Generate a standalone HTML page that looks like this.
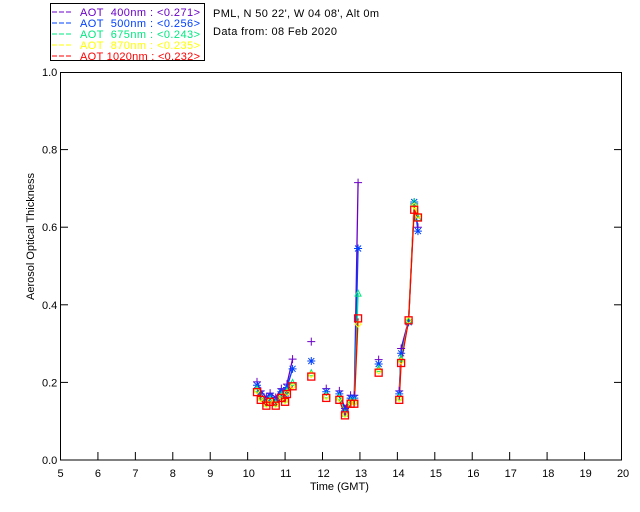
<!DOCTYPE html>
<html><head><style>
body{margin:0;background:#fff;width:640px;height:512px;overflow:hidden}
svg{display:block}
text{font-family:"Liberation Sans",sans-serif;font-size:11px}
</style></head><body>
<svg id="s" width="640" height="512" xmlns="http://www.w3.org/2000/svg">
<rect x="0" y="0" width="640" height="512" fill="#fff"/>
<rect x="50.5" y="3.5" width="154" height="57" fill="none" stroke="#000"/>
<g font-size="11">
<line x1="52" y1="12" x2="73" y2="12" stroke="#6a00c8" stroke-dasharray="5,2"/><text x="80" y="16" fill="#6a00c8" textLength="120" lengthAdjust="spacing" xml:space="preserve">AOT  400nm : &lt;0.271&gt;</text>
<line x1="52" y1="23" x2="73" y2="23" stroke="#0040ff" stroke-dasharray="5,2"/><text x="80" y="27" fill="#0040ff" textLength="120" lengthAdjust="spacing" xml:space="preserve">AOT  500nm : &lt;0.256&gt;</text>
<line x1="52" y1="34" x2="73" y2="34" stroke="#00e880" stroke-dasharray="5,2"/><text x="80" y="38" fill="#00e880" textLength="120" lengthAdjust="spacing" xml:space="preserve">AOT  675nm : &lt;0.243&gt;</text>
<line x1="52" y1="45" x2="73" y2="45" stroke="#ffff00" stroke-dasharray="5,2"/><text x="80" y="49" fill="#ffff00" textLength="120" lengthAdjust="spacing" xml:space="preserve">AOT  870nm : &lt;0.235&gt;</text>
<line x1="52" y1="56" x2="73" y2="56" stroke="#ff0000" stroke-dasharray="5,2"/><text x="80" y="60" fill="#ff0000" textLength="120" lengthAdjust="spacing" xml:space="preserve">AOT 1020nm : &lt;0.232&gt;</text>
</g>
<text x="213" y="17" textLength="166" lengthAdjust="spacing">PML, N 50 22', W 04 08', Alt 0m</text>
<text x="213" y="35" textLength="124" lengthAdjust="spacing">Data from: 08 Feb 2020</text>
<rect x="60.5" y="72.5" width="561" height="387.5" fill="none" stroke="#000"/>
<g id="ax"></g>
<text x="310" y="490" font-size="10">Time (GMT)</text>
<text transform="translate(34,300) rotate(-90)" font-size="9">Aerosol Optical Thickness</text>
<g id="d"></g>
</svg>
<script>
var ns="http://www.w3.org/2000/svg";
function X(t){return 60.5+(t-5)*37.43}
function Y(v){return 460-v*388}
function el(n,a,p,txt){var e=document.createElementNS(ns,n);for(var k in a)e.setAttribute(k,a[k]);if(txt)e.textContent=txt;p.appendChild(e);return e}
var ax=document.getElementById('ax');
for(var t=6;t<20;t++){el('line',{x1:X(t),x2:X(t),y1:460,y2:452,stroke:'#000'},ax)}
for(var t=5;t<=20;t++){el('text',{x:X(t)-(t>=10?5:3),y:477,'font-size':9},ax,''+t)}
for(var i=1;i<5;i++){el('line',{x1:60,x2:68,y1:Y(i/5),y2:Y(i/5),stroke:'#000'},ax);el('line',{x1:614,x2:622,y1:Y(i/5),y2:Y(i/5),stroke:'#000'},ax)}
for(var i=0;i<=5;i++){el('text',{x:42,y:Y(i/5)+4,'font-size':9},ax,(i/5).toFixed(1))}
var T=[10.25,10.35,10.5,10.6,10.75,10.9,11.0,11.05,11.2, 11.7,12.1, 12.45,12.6,12.75,12.85,12.95, 13.5, 14.05,14.1,14.3,14.45,14.55];
var R=[0.175,0.155,0.14,0.15,0.14,0.16,0.15,0.17,0.19, 0.215,0.16, 0.155,0.115,0.145,0.145,0.365, 0.225, 0.155,0.25,0.36,0.645,0.625];
var segs=[[0,8],[11,15],[17,21]];
var cols=['#6a00c8','#0040ff','#00e880','#ffff00','#ff0000'];
var d=document.getElementById('d');
function val(b,i){var r=R[i];var f=[1.15,1.1,1.05,1.02,1][b];var v=r*f;
 if(i==15)v=[0.715,0.545,0.43,0.35,0.365][b];
 if(i==20)v=[0.66,0.665,0.665,0.655,0.645][b];
 if(i==21)v=[0.6,0.59,0.625,0.63,0.625][b];
 if(i==9)v=[0.305,0.255,0.225,0.22,0.215][b];
 if(i==8)v=[0.26,0.235,0.2,0.19,0.19][b];
 if(i==19)v=[0.36,0.355,0.36,0.36,0.36][b];
 return v}
for(var b=0;b<5;b++){
 segs.forEach(function(s){var p=[];for(var i=s[0];i<=s[1];i++)p.push(X(T[i])+','+Y(val(b,i)));el('polyline',{points:p.join(' '),fill:'none',stroke:cols[b],'stroke-width':1.3},d)});
}
for(var b=0;b<5;b++){for(var i=0;i<T.length;i++){var x=X(T[i]),y=Y(val(b,i)),c=cols[b];
 if(b==0){el('path',{d:'M'+(x-4)+' '+y+'h8M'+x+' '+(y-4)+'v8',stroke:c,fill:'none'},d)}
 else if(b==1){el('path',{d:'M'+(x-4)+' '+y+'h8M'+x+' '+(y-4)+'v8M'+(x-3)+' '+(y-3)+'l6 6M'+(x+3)+' '+(y-3)+'l-6 6',stroke:c,fill:'none'},d)}
 else if(b==2){el('path',{d:'M'+(x-3)+' '+(y+3)+'L'+x+' '+(y-3)+'L'+(x+3)+' '+(y+3)+'Z',stroke:c,fill:'none'},d)}
 else if(b==3){el('path',{d:'M'+(x-3)+' '+y+'L'+x+' '+(y-3)+'L'+(x+3)+' '+y+'L'+x+' '+(y+3)+'Z',stroke:c,fill:'none'},d)}
 else {el('rect',{x:x-3.5,y:y-3.5,width:7,height:7,stroke:c,fill:'none','stroke-width':1.3},d)}
}}
</script>
</body></html>
